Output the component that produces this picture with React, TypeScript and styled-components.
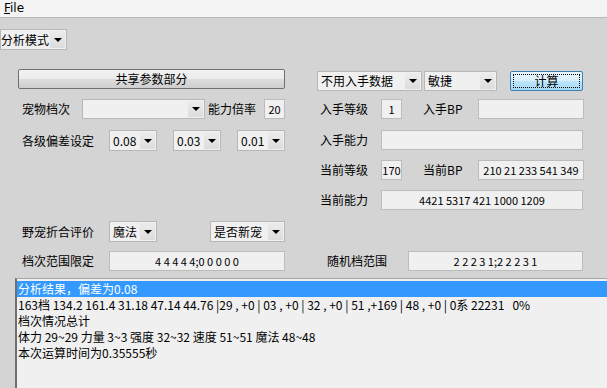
import React from 'react';
import styled, { createGlobalStyle } from 'styled-components';

const Global = createGlobalStyle`
  html, body { margin: 0; padding: 0; background: #d4d4d4; }
  body {
    font-family: "Noto Sans CJK SC", sans-serif;
    font-size: 12px;
    color: #000;
    width: 607px;
    height: 388px;
    overflow: hidden;
  }
`;

const Window = styled.div`
  width: 607px;
  height: 388px;
  display: flex;
  flex-direction: column;
  background: #d4d4d4;
`;

const MenuBar = styled.div`
  height: 17px;
  background: #f4f4f4;
  border-bottom: 1px solid #b9b9b9;
  display: flex;
  align-items: center;
  padding-left: 4px;
  font-family: "DejaVu Sans", sans-serif;
  font-size: 12px;
  line-height: 17px;
  u { text-decoration: underline; }
`;

const ModeRow = styled.div`
  padding-top: 11px;
  display: flex;
`;

const Form = styled.div`
  margin-top: 18px;
  display: grid;
  grid-template-columns: 18px 267px 32px 266px;
  grid-template-rows: 30px 31px 30px 30px 31px 30px 22px;
`;

const Cell = styled.div<{ $col: number; $row: number; $pad?: number; $top?: number }>`
  grid-column: ${(p) => p.$col};
  grid-row: ${(p) => p.$row};
  display: flex;
  align-items: center;
  align-self: start;
  height: 21px;
  padding-left: ${(p) => p.$pad ?? 0}px;
  margin-top: ${(p) => p.$top ?? 0}px;
`;

const Label = styled.span<{ $w: number; $ml?: number }>`
  width: ${(p) => p.$w}px;
  margin-left: ${(p) => p.$ml ?? 0}px;
  flex: none;
  font-family: "Noto Sans CJK SC", sans-serif;
  font-size: 12px;
  line-height: 16px;
  white-space: nowrap;
`;

const ComboBox = styled.div<{ $w: number; $h?: number; $ml?: number }>`
  width: ${(p) => p.$w}px;
  height: ${(p) => p.$h ?? 21}px;
  margin-left: ${(p) => p.$ml ?? 0}px;
  flex: none;
  box-sizing: border-box;
  border: 1px solid #b8b8b8;
  background: #f0f0f0;
  display: flex;
  align-items: stretch;
`;

const ComboText = styled.span<{ $pad?: number }>`
  flex: 1;
  min-width: 0;
  padding-left: ${(p) => p.$pad ?? 3}px;
  display: flex;
  align-items: center;
  font-family: "Noto Sans CJK SC", sans-serif;
  font-size: 12px;
  white-space: nowrap;
`;

const ComboArrow = styled.span`
  width: 15px;
  flex: none;
  margin: 1px;
  background: linear-gradient(#ececec, #dcdcdc);
  border-radius: 1px;
  display: flex;
  align-items: center;
  justify-content: center;
  &::after {
    content: '';
    border-left: 4px solid transparent;
    border-right: 4px solid transparent;
    border-top: 4px solid #000;
  }
`;

const Field = styled.div<{ $w: number; $h?: number; $ml?: number }>`
  width: ${(p) => p.$w}px;
  height: ${(p) => p.$h ?? 20}px;
  margin-left: ${(p) => p.$ml ?? 0}px;
  flex: none;
  box-sizing: border-box;
  border: 1px solid #bcbcbc;
  background: #f0f0f0;
  display: flex;
  align-items: center;
  justify-content: center;
  font-family: "Noto Sans CJK SC", sans-serif;
  font-size: 11px;
  white-space: pre;
`;

const Button = styled.button<{ $w: number; $ml?: number; $default?: boolean }>`
  width: ${(p) => p.$w}px;
  height: 20px;
  margin-left: ${(p) => p.$ml ?? 0}px;
  flex: none;
  box-sizing: border-box;
  padding: 0;
  border: 1px solid ${(p) => (p.$default ? '#3c7fb1' : '#707070')};
  border-radius: 2px;
  background: ${(p) =>
    p.$default
      ? 'linear-gradient(#eaf6fd 0%, #d9f0fc 50%, #bee6fd 51%, #a7d9f5 100%)'
      : 'linear-gradient(#f2f2f2 0%, #ebebeb 50%, #dddddd 51%, #cfcfcf 100%)'};
  font-family: "Noto Sans CJK SC", sans-serif;
  font-size: 12px;
  color: #000;
  display: flex;
  align-items: center;
  justify-content: center;
  position: relative;
  ${(p) =>
    p.$default
      ? `&::after { content: ''; position: absolute; inset: 2px; border: 1px dotted #000; }`
      : ''}
`;

const Output = styled.div`
  margin-top: 6px;
  margin-left: 15px;
  flex: 1;
  background: #f0f0f0;
  border-left: 2px solid #6f6f6f;
  border-top: 1px solid #a5a5a5;
  padding-top: 2px;
  font-family: "Noto Sans CJK SC", sans-serif;
  font-size: 12px;
`;

const Line = styled.div<{ $sel?: boolean }>`
  height: 16px;
  line-height: 16px;
  padding-left: 1px;
  white-space: pre;
  background: ${(p) => (p.$sel ? '#3399ff' : 'transparent')};
  color: ${(p) => (p.$sel ? '#fff' : '#000')};
`;

const Combo = ({ w, h, ml, pad, value }: { w: number; h?: number; ml?: number; pad?: number; value: string }) => (
  <ComboBox $w={w} $h={h} $ml={ml}>
    <ComboText $pad={pad}>{value}</ComboText>
    <ComboArrow />
  </ComboBox>
);

export default function App() {
  return (
    <Window>
      <Global />
      <MenuBar>
        <span>
          <u>F</u>ile
        </span>
      </MenuBar>
      <ModeRow>
        <Combo w={67} pad={0} value="分析模式" />
      </ModeRow>
      <Form>
        <Cell $col={2} $row={1}>
          <Button $w={267}>共享参数部分</Button>
        </Cell>
        <Cell $col={4} $row={1} $top={2}>
          <Combo w={105} h={20} value="不用入手数据" />
          <Combo w={73} h={20} ml={2} value="敏捷" />
          <Button $w={73} $ml={13} $default>
            计算
          </Button>
        </Cell>

        <Cell $col={2} $row={2} $pad={4}>
          <Label $w={60}>宠物档次</Label>
          <Combo w={123} h={20} value="" />
          <Label $w={56} $ml={3}>能力倍率</Label>
          <Field $w={21}>20</Field>
        </Cell>
        <Cell $col={4} $row={2} $pad={3}>
          <Label $w={61}>入手等级</Label>
          <Field $w={21}>1</Field>
          <Label $w={55} $ml={21}>入手BP</Label>
          <Field $w={106} />
        </Cell>

        <Cell $col={2} $row={3} $pad={4} $top={1}>
          <Label $w={87}>各级偏差设定</Label>
          <Combo w={48} value="0.08" />
          <Combo w={48} ml={16} value="0.03" />
          <Combo w={48} ml={16} value="0.01" />
        </Cell>
        <Cell $col={4} $row={3} $pad={3}>
          <Label $w={61}>入手能力</Label>
          <Field $w={202} />
        </Cell>

        <Cell $col={4} $row={4} $pad={3}>
          <Label $w={61}>当前等级</Label>
          <Field $w={21}>170</Field>
          <Label $w={55} $ml={21}>当前BP</Label>
          <Field $w={106}>210 21 233 541 349</Field>
        </Cell>

        <Cell $col={4} $row={5} $pad={3}>
          <Label $w={61}>当前能力</Label>
          <Field $w={202}>4421 5317 421 1000 1209</Field>
        </Cell>

        <Cell $col={2} $row={6} $pad={4} $top={1}>
          <Label $w={87}>野宠折合评价</Label>
          <Combo w={48} value="魔法" />
          <Combo w={75} ml={53} value="是否新宠" />
        </Cell>

        <Cell $col={2} $row={7} $pad={4}>
          <Label $w={87}>档次范围限定</Label>
          <Field $w={176}>4 4 4 4 4;0 0 0 0 0</Field>
        </Cell>
        <Cell $col={4} $row={7} $pad={10}>
          <Label $w={81}>随机档范围</Label>
          <Field $w={175}>2 2 2 3 1;2 2 2 3 1</Field>
        </Cell>
      </Form>
      <Output>
        <Line $sel>分析结果，偏差为0.08</Line>
        <Line>163档 134.2 161.4 31.18 47.14 44.76 |29 , +0 | 03 , +0 | 32 , +0 | 51 ,+169 | 48 , +0 | 0系 22231   0%</Line>
        <Line>档次情况总计</Line>
        <Line>体力 29~29 力量 3~3 强度 32~32 速度 51~51 魔法 48~48</Line>
        <Line>本次运算时间为0.35555秒</Line>
      </Output>
    </Window>
  );
}
